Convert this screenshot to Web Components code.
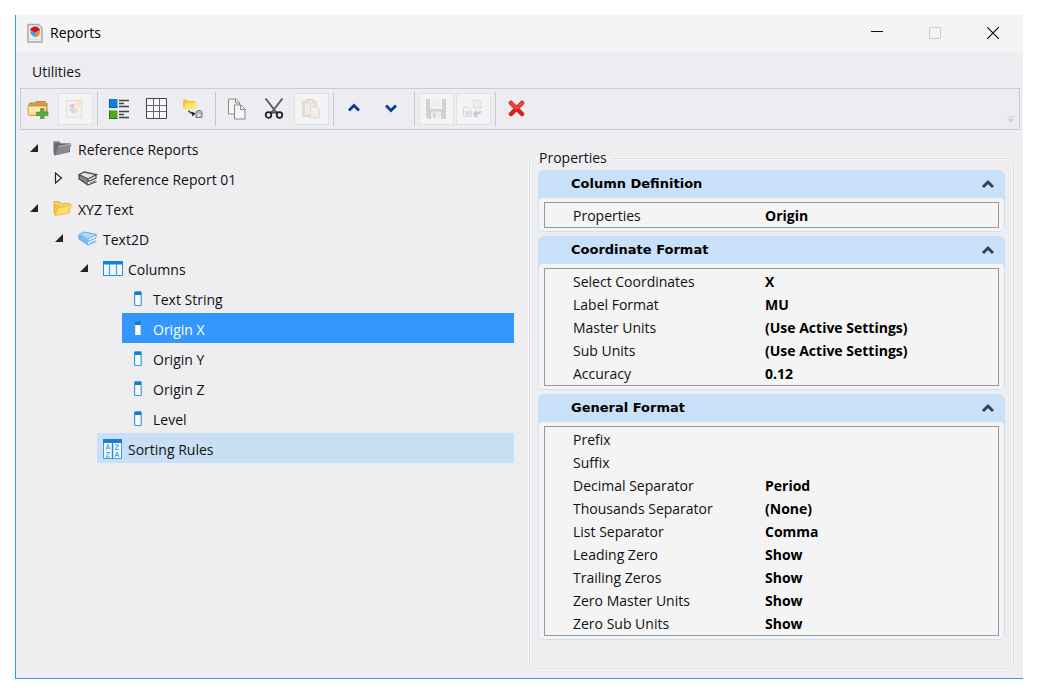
<!DOCTYPE html>
<html lang="en">
<head>
<meta charset="utf-8">
<title>Reports</title>
<style>
  body { margin: 15px 19px 15px 15px; background: #fff; color: #111; font: 14px/20px "Open Sans", "Noto Sans", sans-serif; }
</style>
</head>
<body>
<report-window caption="Reports">
  <menu-strip slot="menu"><menu-entry>Utilities</menu-entry></menu-strip>
  <tool-strip slot="tools">
    <tool-button icon="folder-add" label="New Folder"></tool-button>
    <tool-button icon="report-new" label="New Report" disabled></tool-button>
    <tool-divider></tool-divider>
    <tool-button icon="list" label="Edit List"></tool-button>
    <tool-button icon="grid" label="Results Grid"></tool-button>
    <tool-button icon="place" label="Place Report"></tool-button>
    <tool-divider></tool-divider>
    <tool-button icon="copy" label="Copy"></tool-button>
    <tool-button icon="cut" label="Cut"></tool-button>
    <tool-button icon="paste" label="Paste" disabled></tool-button>
    <tool-divider></tool-divider>
    <tool-button icon="up" label="Move Up"></tool-button>
    <tool-button icon="down" label="Move Down"></tool-button>
    <tool-divider></tool-divider>
    <tool-button icon="save" label="Save" disabled></tool-button>
    <tool-button icon="export" label="Export" disabled></tool-button>
    <tool-divider></tool-divider>
    <tool-button icon="delete" label="Delete"></tool-button>
  </tool-strip>
  <report-tree slot="tree">
    <tree-node icon="folder-gray" label="Reference Reports" state="open">
      <tree-node icon="book-gray" label="Reference Report 01" state="closed"></tree-node>
    </tree-node>
    <tree-node icon="folder" label="XYZ Text" state="open">
      <tree-node icon="book" label="Text2D" state="open">
        <tree-node icon="columns" label="Columns" state="open">
          <tree-node icon="column" label="Text String"></tree-node>
          <tree-node icon="column" label="Origin X" mark="selected"></tree-node>
          <tree-node icon="column" label="Origin Y"></tree-node>
          <tree-node icon="column" label="Origin Z"></tree-node>
          <tree-node icon="column" label="Level"></tree-node>
        </tree-node>
        <tree-node icon="sorting" label="Sorting Rules" mark="hover"></tree-node>
      </tree-node>
    </tree-node>
  </report-tree>
  <property-panel slot="properties" caption="Properties">
    <property-group caption="Column Definition">
      <property-item name="Properties" value="Origin"></property-item>
    </property-group>
    <property-group caption="Coordinate Format">
      <property-item name="Select Coordinates" value="X"></property-item>
      <property-item name="Label Format" value="MU"></property-item>
      <property-item name="Master Units" value="(Use Active Settings)"></property-item>
      <property-item name="Sub Units" value="(Use Active Settings)"></property-item>
      <property-item name="Accuracy" value="0.12"></property-item>
    </property-group>
    <property-group caption="General Format">
      <property-item name="Prefix" value=""></property-item>
      <property-item name="Suffix" value=""></property-item>
      <property-item name="Decimal Separator" value="Period"></property-item>
      <property-item name="Thousands Separator" value="(None)"></property-item>
      <property-item name="List Separator" value="Comma"></property-item>
      <property-item name="Leading Zero" value="Show"></property-item>
      <property-item name="Trailing Zeros" value="Show"></property-item>
      <property-item name="Zero Master Units" value="Show"></property-item>
      <property-item name="Zero Sub Units" value="Show"></property-item>
    </property-group>
  </property-panel>
</report-window>

<script>
// name: [width, height, svg body]
const ICONS = {
  'app': [16, 20, `<path d="M1 1.500h10.500l3.500 3.500v14H1z" fill="#ececec" stroke="#aaa" stroke-width="1.500"/><path d="M11 2v4h4" fill="#fff" stroke="#bbb"/><path d="M3 8l5 1.500 2 4.500q-6 0-7-6z" fill="#2fa6f0"/><path d="M3 7q1.500-3.500 5-3.500 3.500 0 5 3.500L8 10z" fill="#d3122a"/><path d="M8 10l5-3q.5 5-3 7z" fill="#f08a24"/><path d="M3 16.500h10" stroke="#ddd"/>`],
  'folder-add': [22, 20, `<path d="M1.500 6.500 3 4h4.500l1.500-1.500h9l2 2v9.500H1.500z" fill="#d8983e" stroke="#b98545"/><path d="M1 8.500q0-1.500 1.500-1.500h16q1.500 0 1 1.500l-1 6.500q-.3 1.500-2 1.500H3.500q-2 0-2.200-1.500z" fill="#fde9b0" stroke="#d3983f"/><path d="M3 14.500h10" stroke="#f6d272" stroke-width="2"/><path d="M13.500 9.500h3.500v3.500h4v3.500h-4V20h-3.500v-3.500h-4V13h4z" fill="#57ac45" stroke="#3f8d31" stroke-width=".6"/>`],
  'report-new': [20, 20, `<path d="M1.500 1.500h15v17h-15z" fill="#eee" stroke="#aaa"/><path d="M4 8.500 9 9l1 5.500q-5 0-6-6z" fill="#4da4e8"/><path d="M4 7.500Q6 4 9.500 5L9 9z" fill="#e03030"/><path d="M9.500 9h3.500q0 4-3 5.500z" fill="#f19a3b"/><path d="M14.500 0v9M10 4.500h9M11.500 1.500l6 6M17.500 1.500l-6 6" stroke="#f7b868" stroke-width="1.500"/>`],
  'list': [22, 20, `<path d="M1 0h8.500v9H1z" fill="#0b84d8"/><path d="M1 11.500h8.500v8.500H1z" fill="#56a61c"/><path d="M1 8.500h8.500M1.500 0v9" stroke="#0a5f9f"/><path d="M1 19.500h8.500M1.500 11.500v8" stroke="#35700f"/><path d="M11 1.500h10M11 7.500h10M11 12.500h10M11 18.500h10" stroke="#3f4449" stroke-width="1.500"/><path d="M11 4.500h5M11 15.500h5" stroke="#3f4449" stroke-width="1.300"/>`],
  'grid': [21, 21, `<path d="M.5.500h20v20H.5z" fill="#fafafa"/><path d="M7.500 1v19M13.500 1v19M1 7.500h19M1 13.500h19" fill="none" stroke="#66686e"/><path d="M.5.500h20v20H.5z" fill="none" stroke="#44464c"/>`],
  'place': [22, 20, `<path d="M1 .500h4l1 1.500h7v7L3 10 1 8z" fill="#f6c33d"/><path d="M4 4.500 15.500 3.500 13 10 2 9.500z" fill="#ffe36b"/><path d="M6.500 11.500q2 3.500 6 3" fill="none" stroke="#333" stroke-width="1.300"/><path d="M9.500 12.500l4 2-3 3z" fill="#222"/><path d="M14 13l2-1.500h2.500l1.500 1.500v5.500h-6z" fill="#bbb" stroke="#777"/><path d="M15.500 15h3v2.500h-3z" fill="#e2e2e2"/>`],
  'copy': [20, 22, `<path d="M1.500 1h7.500l3.500 3.500v11.500h-11z" fill="#f4f4f4" stroke="#8b8b8b"/><path d="M7.500 7h6.500l4 4v10H7.500z" fill="#f6f6f6" stroke="#8b8b8b"/><path d="M8.500 1v4h4M13.500 7v4.500h4.500" fill="none" stroke="#8b8b8b"/>`],
  'cut': [20, 21, `<path d="M1.500.500 12.500 14.500M18.500.500 7.500 14.500" stroke="#59606b" stroke-width="2"/><path d="M6 14.500h8" stroke="#4b5059" stroke-width="2"/><circle cx="4.500" cy="17" r="2.800" fill="none" stroke="#20252c" stroke-width="1.800"/><circle cx="15.500" cy="17" r="2.800" fill="none" stroke="#20252c" stroke-width="1.800"/>`],
  'paste': [20, 20, `<path d="M1.500 2.500h14v15h-14z" fill="#e2a463" stroke="#c28448"/><path d="M5 .500h7v4H5z" fill="#bbb" stroke="#888"/><path d="M4 4.500h9v11H4z" fill="#f3d5b0"/><path d="M9.500 7.500h6l3 3v8.500h-9z" fill="#e5e5e5" stroke="#999"/>`],
  'up': [16, 16, `<path d="m2 9.500 5-5 5 5" fill="none" stroke="#0b3c91" stroke-width="2.800"/>`],
  'down': [16, 16, `<path d="m2 4.500 5 5 5-5" fill="none" stroke="#0b3c91" stroke-width="2.800"/>`],
  'save': [20, 20, `<path d="M0 0h20v20H2l-2-2z" fill="#7d7d7d"/><path d="M4 0h12v10H4z" fill="#eee"/><path d="M5 3.500h10M5 6.500h10" stroke="#ccc"/><path d="M5 12.500h10V20H5z" fill="#ddd"/><path d="M7 14h2.500v4.500H7z" fill="#777"/>`],
  'export': [20, 20, `<path d="M10.500 1h5l3 3v5h-8z" fill="#ddd" stroke="#999"/><path d="M.5 8h5l3 3v6.500H.5z" fill="#eee" stroke="#999"/><path d="M2 12h5.500v4.500H2z" fill="#7eb7ec"/><path d="M17.500 12q-.5 3-6.500 3m3-3-3 3 3 3" fill="none" stroke="#555" stroke-width="1.800"/>`],
  'delete': [18, 18, `<path d="m3 3 11 11M14 3 3 14" stroke="#d92020" stroke-width="4.500" stroke-linecap="round"/><path d="m3 3 5 5M14 3 9 8" stroke="#e94a45" stroke-width="2.500" stroke-linecap="round"/>`],
  'folder-gray': [20, 20, `<path d="M.5 2.500h6l1 1.500h9.500v9L1.500 16.500.5 14z" fill="#6b6a70"/><path d="M2 16.500 5.500 7.500 18.500 5l-3 8z" fill="#8a898e"/><path d="M5.500 7.500 18.500 5" stroke="#b5b5b8"/><path d="M1 3h5M7.500 4.500h9" stroke="#96959a"/>`],
  'folder': [20, 20, `<path d="M1 2.500h5l1 2h9.500v9L2 16.500 1 13z" fill="#f4bd44" stroke="#e6ab3a" stroke-width=".8"/><path d="M2 16.500 5.500 8.500q6 0 13-3l-3 8.500z" fill="#ffe06c" stroke="#efbb45" stroke-width=".8"/><path d="M2 4.500h3.500l1 1.500H15" fill="none" stroke="#ffe9a0"/>`],
  'book-gray': [20, 20, `<path d="M1 5.500V10l9 6 8.500-3.500V7z" fill="#f2f2f2"/><path d="M1 5.500V10l9 6v-5z" fill="#85878a"/><path d="M1 5.500 6.500 3 18.500 5.500 10 10z" fill="#e4e4e6"/><path d="M1 5.500 6.500 3 18.500 5.500 10 10zM1 5.500V10l9 6 8.500-3.500M10 10v2.500l8-3.500V6" fill="none" stroke="#4b4d50" stroke-width="1.300"/><path d="m12 14 5.500-2.500" stroke="#777"/>`],
  'book': [20, 20, `<path d="M1 5.500V10l9 6 8.500-3.500V7z" fill="#e8f4ff"/><path d="M1 5.500V10l9 6v-5z" fill="#7dbaf0"/><path d="M1 5.500 6.500 3 18.500 5.500 10 10z" fill="#b4dafa"/><path d="M1 5.500 6.500 3 18.500 5.500 10 10zM1 5.500V10l9 6 8.500-3.500M10 10v2.500l8-3.500V6" fill="none" stroke="#62a9e8"/><path d="m12 14 5.500-2.500" stroke="#8dc3f2"/>`],
  'columns': [20, 16, `<path d="M.5.500h19v14H.5z" fill="#f5f8fb" stroke="#1e8fe0"/><path d="M0 0h20v3.500H0z" fill="#0d84d8"/><path d="M6.500 3v12M13.500 3v12" stroke="#4ca4e2" stroke-width="1.300"/>`],
  'column': [20, 16, `<rect x="6.600" y="1" width="6.600" height="13.500" rx=".5" fill="#fbfbfb" stroke="#3b9ade" stroke-width="1.200"/><path d="M7 .500h6v3.500H7z" fill="#0a80cf"/>`],
  'sorting': [20, 20, `<path d="M.5.500h18v19H.5z" fill="#f3f9fd" stroke="#3b9ce0"/><path d="M0 0h19v4H0z" fill="#0d84d8"/><path d="M9.500 3v16.500" stroke="#1b8cdc" stroke-width="1.500"/><path d="m3 10.500 2-5 2 5m-3.300-1.500h2.600M3 13.500h3.500l-3.500 4.500h4M12 6h3.500l-3.500 4.500h4M12 18l2-5 2 5m-3.300-1.500h2.600" fill="none" stroke="#4d9fdb"/>`],
  'open': [12, 12, `<path d="M9 2v8H1z" fill="#222"/>`],
  'closed': [12, 12, `<path d="M1.500 1v10l6-5z" fill="#f7f7f7" stroke="#222" stroke-width="1.200"/>`],
  'chevron': [14, 10, `<path d="m3 8 5-5 5 5" fill="none" stroke="#39414d" stroke-width="3"/>`],
  'overflow': [10, 8, `<path d="M1 .500h8" stroke="#d2d4dc"/><path d="M1.500 2.500h7L5 7z" fill="#cdd0d8"/>`],
  'minimize': [12, 12, `<path d="M0 4.500h12" stroke="#111"/>`],
  'maximize': [12, 12, `<path d="M.5.500h11v11H.5z" fill="none" stroke="#ccc"/>`],
  'close': [12, 12, `<path d="m0 0 12 12M12 0 0 12" stroke="#111" stroke-width="1.200"/>`]
};
const icon = name => {
  const [w, h, body] = ICONS[name];
  return `<svg width="${w}" height="${h}" viewBox="0 0 ${w} ${h}" aria-hidden="true">${body}</svg>`;
};
const BASE = `*{box-sizing:border-box} svg{display:block;flex:none} button{font:inherit;color:inherit;background:none;border:0;padding:0;margin:0}`;

class View extends HTMLElement {
  connectedCallback() {
    if (this.shadowRoot) return;
    this.attachShadow({ mode: 'open' }).innerHTML = `<style>${BASE}${this.css()}</style>${this.html()}`;
  }
  attr(n) { return this.getAttribute(n) || ''; }
  css() { return ''; }
  html() { return '<slot></slot>'; }
}

customElements.define('report-window', class extends View {
  css() { return `
    :host{display:flex;flex-direction:column;box-sizing:border-box;min-height:calc(100vh - 30px);background:#eeedf0;border-left:1px solid #3399f7;border-bottom:1px solid #3399f7}
    header{display:flex;align-items:center;height:37px;background:#f4f4f4;padding:0 1px 1px 11px}
    h1{flex:1;margin:0 0 0 7px;font:inherit;color:#000}
    header button{width:58px;height:36px;display:grid;place-items:center}
    main{flex:1;display:grid;grid-template-columns:minmax(0,498fr) minmax(0,509fr)}`; }
  html() { return `<header>${icon('app')}<h1>${this.attr('caption')}</h1>
    <button aria-label="Minimize">${icon('minimize')}</button><button aria-label="Maximize" disabled>${icon('maximize')}</button><button aria-label="Close">${icon('close')}</button></header>
    <slot name="menu"></slot><slot name="tools"></slot>
    <main><slot name="tree"></slot><slot name="properties"></slot></main>`; }
});

customElements.define('menu-strip', class extends View {
  css() { return `:host{display:flex;align-items:center;height:36px;padding:2px 8px 0;background:#edecf1;border-top:1px solid #f1f1f2;box-sizing:border-box}`; }
});
customElements.define('menu-entry', class extends View {
  css() { return `:host{display:block} button{padding:0 8px}`; }
  html() { return `<button><slot></slot></button>`; }
});

customElements.define('tool-strip', class extends View {
  css() { return `
    :host{display:flex;box-sizing:border-box;height:42px;margin:0 3px 0 4px;border:1px solid #c9c9dc;background:#edecf1}
    div{flex:1;display:flex;align-items:center;gap:2px}
    .more{align-self:flex-end;padding:0 3px 5px}`; }
  html() { return `<div role="toolbar" aria-label="Report tools"><slot></slot></div><button class="more" aria-label="Toolbar options">${icon('overflow')}</button>`; }
});
customElements.define('tool-button', class extends View {
  css() { return `
    :host{display:block}
    button{width:35px;height:32px;display:grid;place-items:center;padding:0 1px 1px 0}
    button:disabled{background:#f4f4f5;border:1px solid #d9e3ea}
    button:disabled svg{opacity:.28}`; }
  html() { return `<button aria-label="${this.attr('label')}" ${this.hasAttribute('disabled') ? 'disabled' : ''}>${icon(this.attr('icon'))}</button>`; }
});
customElements.define('tool-divider', class extends View {
  css() { return `:host{display:block;width:1px;height:34px;margin:0 2px;background:#c6c6d2}`; }
  html() { return ''; }
});

customElements.define('report-tree', class extends View {
  css() { return `:host{display:block;padding:3px 0 0 6px}`; }
  html() { return `<div role="tree" aria-label="Reports"><slot></slot></div>`; }
});
customElements.define('tree-node', class extends View {
  css() { return `
    :host{display:block}
    .row{display:flex;height:30px}
    .toggle{width:25px;height:30px;display:grid;place-items:center;flex:none}
    .item{flex:1;display:flex;align-items:center;gap:5px;padding:4px 6px 0}
    .item svg{margin-bottom:3px}
    .selected{background:#3397fd;color:#fff}
    .hover{background:#c9dff6}
    .kids{padding-left:25px}`; }
  html() {
    const s = this.attr('state');
    const toggle = s ? `<button class="toggle" aria-label="Toggle ${this.attr('label')}">${icon(s)}</button>` : `<span class="toggle"></span>`;
    return `<div class="row" role="treeitem" aria-selected="${this.attr('mark') === 'selected'}">${toggle}<span class="item ${this.attr('mark')}">${icon(this.attr('icon'))}<span>${this.attr('label')}</span></span></div>
      <div class="kids" role="group"><slot></slot></div>`; }
});

customElements.define('property-panel', class extends View {
  css() { return `
    :host{display:block;padding:18px 9px 9px 15px}
    fieldset{min-width:0;height:100%;margin:0;padding:2px 8px 28px;border:1px solid #d6e1e8;border-radius:4px;box-shadow:0 0 0 1px #f5f5f5,inset 0 0 0 1px #f5f5f5}
    legend{padding:0 5px 0 3px;margin-left:-2px;height:20px}
    .groups{display:flex;flex-direction:column;gap:4px}`; }
  html() { return `<fieldset><legend>${this.attr('caption')}</legend><div class="groups"><slot></slot></div></fieldset>`; }
});
customElements.define('property-group', class extends View {
  css() { return `
    :host{display:block;border-radius:6px;background:#c8e0f8;padding:0 1px 1px}
    h2{margin:0;font:bold 13px/28px "DejaVu Sans",sans-serif;color:#000}
    h2 button{display:flex;align-items:center;width:100%;height:28px;padding:0 10px 0 32px;text-align:left}
    h2 span{flex:1}
    .body{background:#f4f4f4;border-radius:4px;padding:4px 5px 3px}
    .frame{border:1px solid #999;padding:1px 0 0}
    table{width:100%;border-collapse:collapse;table-layout:fixed;color:#111}
    tr{height:23px}
    th,td{height:23px;padding:0;text-align:left;line-height:20px;vertical-align:middle}
    th{width:220px;padding-left:28px;font-weight:normal}
    td{font-weight:bold;color:#000}`; }
  html() {
    const rows = [...this.querySelectorAll('property-item')].map(p =>
      `<tr><th scope="row">${p.getAttribute('name')}</th><td>${p.getAttribute('value')}</td></tr>`).join('');
    return `<h2><button aria-expanded="true"><span>${this.attr('caption')}</span>${icon('chevron')}</button></h2>
      <div class="body"><div class="frame"><table>${rows}</table></div></div>`; }
});
customElements.define('property-item', class extends HTMLElement {});
</script>
</body>
</html>
